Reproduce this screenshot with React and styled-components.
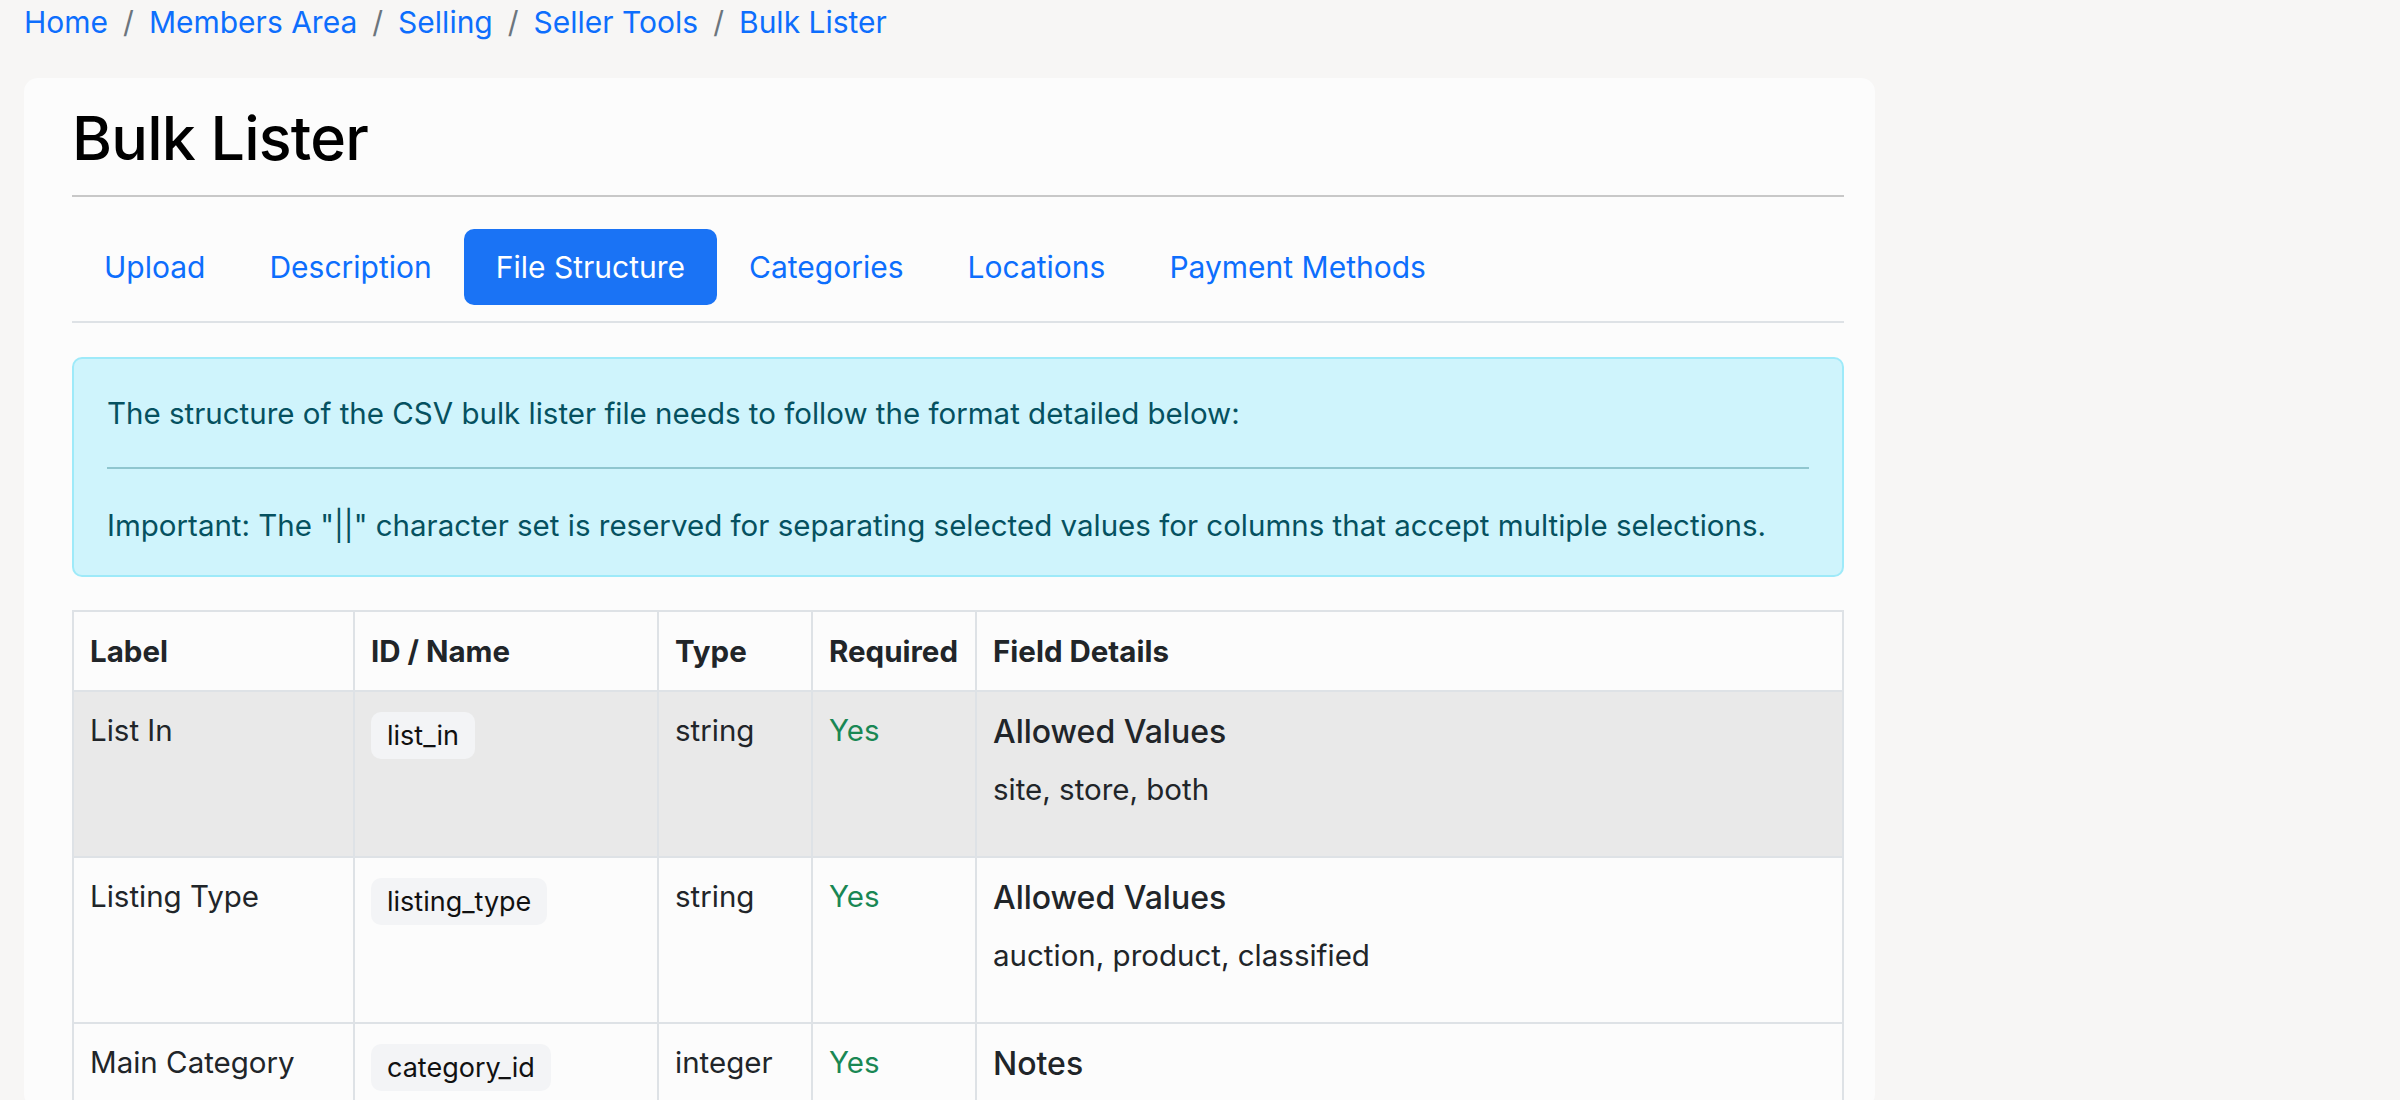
import React from 'react';
import styled, { createGlobalStyle } from 'styled-components';

const Global = createGlobalStyle`
  html, body { margin: 0; background: #f7f6f5; }
  body { font-family: Inter, "Noto Sans", sans-serif; color: #212529; font-size: 29.5px; }
  * { box-sizing: border-box; }
`;

const Page = styled.div`
  padding: 0 24px;
  width: 1899px;
`;

const Crumbs = styled.nav`
  display: flex;
  align-items: center;
  gap: 15px;
  height: 44px;
  font-size: 30px;
  color: #0d6efd;
  margin-bottom: 34px;
`;

const Sep = styled.span`
  color: #6c757d;
`;

const Card = styled.div`
  background: #fcfcfc;
  border-radius: 14px;
  padding: 24px 31px 0 48px;
  height: 1030px;
  overflow: hidden;
`;

const Title = styled.h1`
  margin: 0;
  font-size: 61px;
  font-weight: 500;
  color: #000;
  line-height: 1;
  padding: 6px 0 26px;
  border-bottom: 2px solid #c8c8c8;
  letter-spacing: -0.8px;
`;

const Tabs = styled.div`
  display: flex;
  margin-top: 32px;
  padding-bottom: 16px;
  border-bottom: 2px solid #dee2e6;
`;

const Tab = styled.div`
  padding: 0 32px;
  height: 76px;
  display: flex;
  align-items: center;
  font-size: 30px;
  border-radius: 10px;
  color: ${p => (p.active ? '#fff' : '#0d6efd')};
  background: ${p => (p.active ? '#1a73f5' : 'transparent')};
`;

const Alert = styled.div`
  margin-top: 34px;
  background: #cff4fc;
  border: 2px solid #9eeaf9;
  border-radius: 10px;
  color: #055160;
  padding: 36px 33px 32px;
  font-size: 29.5px;
`;

const AlertRule = styled.hr`
  border: none;
  border-top: 2px solid #8fc6cf;
  margin: 36px 0 38px;
`;

const Table = styled.table`
  margin-top: 33px;
  width: 100%;
  border-collapse: collapse;
  font-size: 29.5px;
  th, td {
    border: 2px solid #dee2e6;
    text-align: left;
    vertical-align: top;
    padding: 20px 16px;
  }
  th { font-weight: 700; height: 80px; vertical-align: middle; }
`;

const Row = styled.tr`
  background: ${p => (p.striped ? '#e9e9e9' : 'transparent')};
  td { height: 166px; }
`;

const Code = styled.span`
  display: inline-block;
  background: #f3f4f6;
  border-radius: 10px;
  padding: 7px 16px;
  font-size: 27px;
  color: #111;
`;

const Yes = styled.span`
  color: #198754;
`;

const DetailHead = styled.div`
  font-size: 32px;
  font-weight: 500;
  margin-bottom: 20px;
`;

const rows = [
  { label: 'List In', id: 'list_in', type: 'string', head: 'Allowed Values', body: 'site, store, both' },
  { label: 'Listing Type', id: 'listing_type', type: 'string', head: 'Allowed Values', body: 'auction, product, classified' },
  { label: 'Main Category', id: 'category_id', type: 'integer', head: 'Notes', body: '' },
];

export default function App() {
  const crumbs = ['Home', 'Members Area', 'Selling', 'Seller Tools', 'Bulk Lister'];
  const tabs = ['Upload', 'Description', 'File Structure', 'Categories', 'Locations', 'Payment Methods'];
  return (
    <Page>
      <Global />
      <Crumbs>
        {crumbs.map((c, i) => (
          <React.Fragment key={c}>
            {i > 0 && <Sep>/</Sep>}
            <span>{c}</span>
          </React.Fragment>
        ))}
      </Crumbs>
      <Card>
        <Title>Bulk Lister</Title>
        <Tabs>
          {tabs.map(t => (
            <Tab key={t} active={t === 'File Structure'}>{t}</Tab>
          ))}
        </Tabs>
        <Alert>
          The structure of the CSV bulk lister file needs to follow the format detailed below:
          <AlertRule />
          Important: The "||" character set is reserved for separating selected values for columns that accept multiple selections.
        </Alert>
        <Table>
          <colgroup>
            <col style={{ width: 281 }} />
            <col style={{ width: 304 }} />
            <col style={{ width: 154 }} />
            <col style={{ width: 164 }} />
            <col />
          </colgroup>
          <thead>
            <tr>
              <th>Label</th><th>ID / Name</th><th>Type</th><th>Required</th><th>Field Details</th>
            </tr>
          </thead>
          <tbody>
            {rows.map((r, i) => (
              <Row key={r.id} striped={i === 0}>
                <td>{r.label}</td>
                <td><Code>{r.id}</Code></td>
                <td>{r.type}</td>
                <td><Yes>Yes</Yes></td>
                <td>
                  <DetailHead>{r.head}</DetailHead>
                  {r.body}
                </td>
              </Row>
            ))}
          </tbody>
        </Table>
      </Card>
    </Page>
  );
}
